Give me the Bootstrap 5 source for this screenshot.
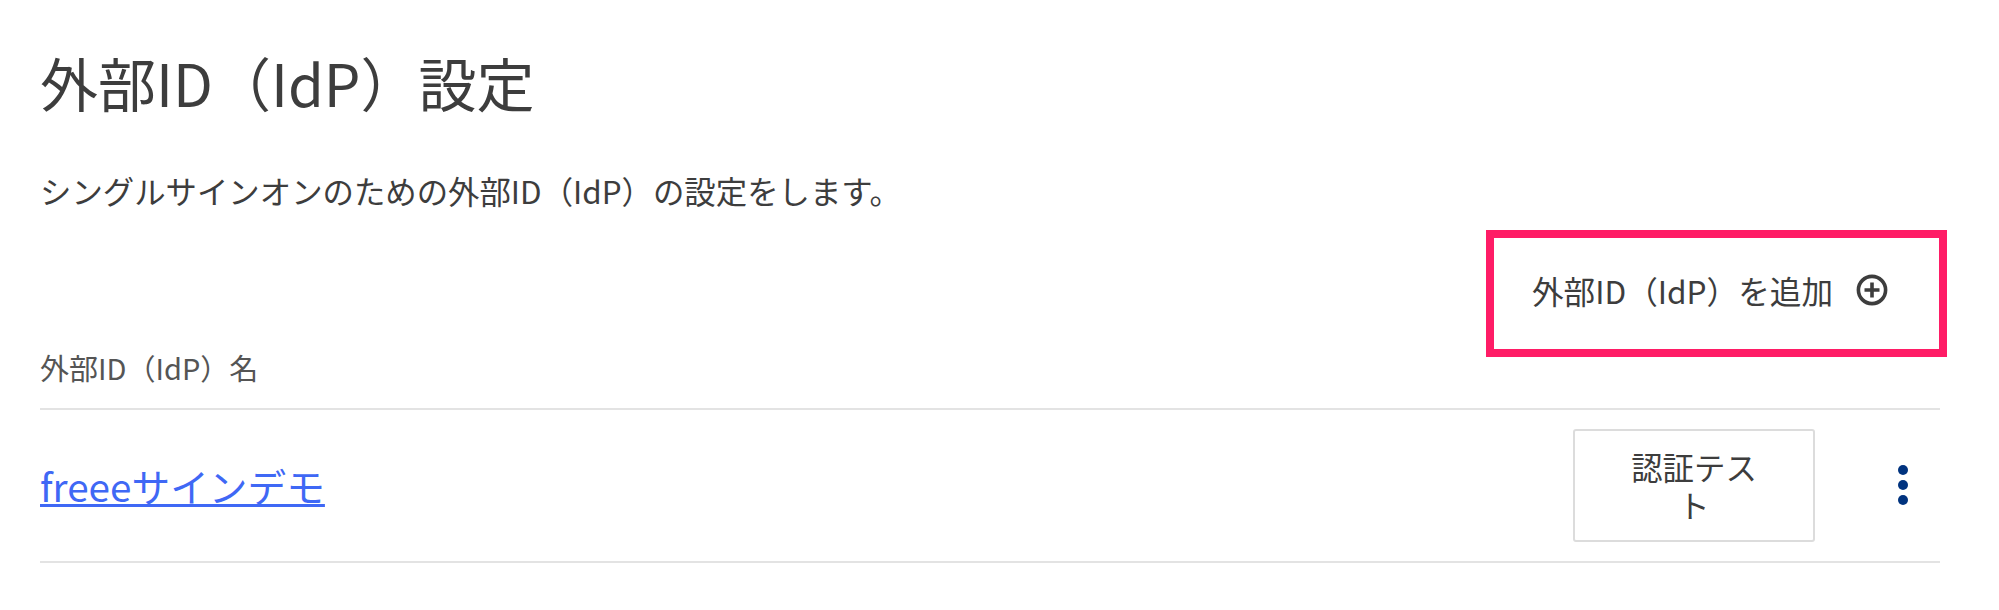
<!DOCTYPE html>
<html lang="ja">
<head>
<meta charset="utf-8">
<title>外部ID（IdP）設定</title>
<link href="https://cdn.jsdelivr.net/npm/bootstrap@5.3.0/dist/css/bootstrap.min.css" rel="stylesheet">
<style>
html, body { height: 100%; }
body { background: #fff; color: #3d3d3d; font-family: "Noto Sans CJK JP", "Noto Sans", sans-serif; overflow: hidden; }
.idp-page { position: relative; height: 610px; padding: 0 59px 0 40px; }
.idp-title { font-size: 58px; font-weight: 400; line-height: 72px; margin: 0; padding-top: 46px; color: #3d3d3d; }
.idp-desc { font-size: 31.4px; line-height: 38px; margin: 0; padding-top: 54px; }
.idp-toolbar { height: 138px; padding-right: 52px; padding-top: 61px; }
.idp-add { font-size: 31.6px; line-height: 38px; color: #3d3d3d; background: none; border: 0; padding: 0; }
.idp-add svg { width: 32px; height: 32px; margin-left: 23px; }
.idp-head { font-size: 29px; line-height: 34px; height: 62px; padding-top: 2px; border-bottom: 2px solid #e3e3e3; color: #555; }
.idp-row { height: 153px; border-bottom: 2px solid #e3e3e3; }
.idp-link { font-size: 38.7px; line-height: 50px; color: #3f68f5; margin-top: -2px; }
.idp-test { width: 242px; height: 113px; font-size: 31.4px; line-height: 38px; color: #3d3d3d; background: #fff; border: 2px solid #dcdcdc; border-radius: 3px; padding: 0 50px; }
.idp-more { width: 24px; margin-left: 76px; margin-right: 25px; background: none; border: 0; padding: 0; }
.idp-more svg { display: block; width: 24px; height: 44px; }
.idp-highlight { position: absolute; left: 1486px; top: 230px; width: 461px; height: 127px; border: 8px solid #ff1c66; pointer-events: none; }
</style>
</head>
<body>
<main class="idp-page">
  <h1 class="idp-title">外部ID（IdP）設定</h1>
  <p class="idp-desc">シングルサインオンのための外部ID（IdP）の設定をします。</p>
  <div class="idp-toolbar d-flex justify-content-end align-items-start">
    <button type="button" class="idp-add d-inline-flex align-items-center">外部ID（IdP）を追加
      <svg viewBox="0 0 32 32" fill="none" stroke="#3d3d3d" stroke-width="3.6" aria-hidden="true"><circle cx="16" cy="16" r="13.6"/><path d="M16 8.5v15M8.5 16h15"/></svg>
    </button>
  </div>
  <div class="idp-head">外部ID（IdP）名</div>
  <div class="idp-row d-flex align-items-center justify-content-between">
    <a class="idp-link" href="#">freeeサインデモ</a>
    <div class="d-flex align-items-center">
      <button type="button" class="idp-test">認証テスト</button>
      <button type="button" class="idp-more" aria-label="メニュー">
        <svg viewBox="0 0 24 44" fill="#00337f" aria-hidden="true"><circle cx="12" cy="6" r="5"/><circle cx="12" cy="21" r="5"/><circle cx="12" cy="36" r="5"/></svg>
      </button>
    </div>
  </div>
  <div class="idp-highlight"></div>
</main>
<script src="https://cdn.jsdelivr.net/npm/bootstrap@5.3.0/dist/js/bootstrap.bundle.min.js"></script>
</body>
</html>
